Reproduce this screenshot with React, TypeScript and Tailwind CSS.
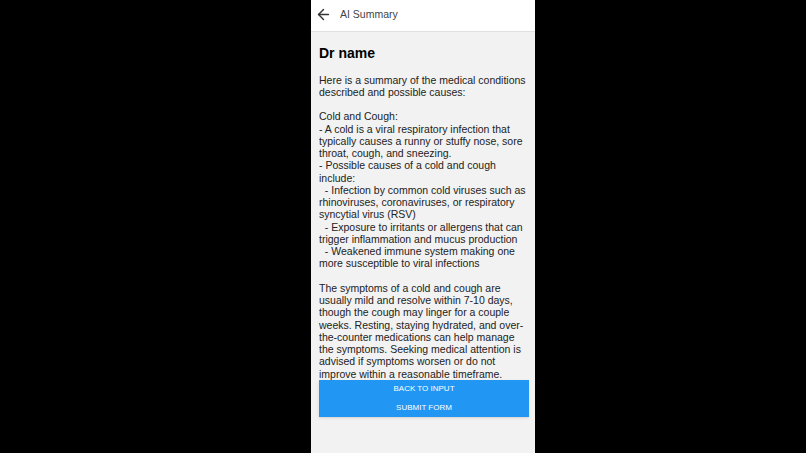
import { ArrowLeft } from 'lucide-react';

const summary = `Here is a summary of the medical conditions described and possible causes:

Cold and Cough:
- A cold is a viral respiratory infection that typically causes a runny or stuffy nose, sore throat, cough, and sneezing.
- Possible causes of a cold and cough include:
  - Infection by common cold viruses such as rhinoviruses, coronaviruses, or respiratory syncytial virus (RSV)
  - Exposure to irritants or allergens that can trigger inflammation and mucus production
  - Weakened immune system making one more susceptible to viral infections

The symptoms of a cold and cough are usually mild and resolve within 7-10 days, though the cough may linger for a couple weeks. Resting, staying hydrated, and over-the-counter medications can help manage the symptoms. Seeking medical attention is advised if symptoms worsen or do not improve within a reasonable timeframe.`;

export default function App() {
  return (
    <div className="flex h-[453px] w-full bg-black pl-[311px] font-['Liberation_Sans',Arial,sans-serif]">
      <div className="flex w-[224px] flex-col bg-[#f2f2f2]">
        <div className="flex h-[32px] shrink-0 items-center border-b border-[#e0e0e0] bg-white pb-[2px] pl-[3.5px]">
          <ArrowLeft className="h-[17px] w-[17px] text-[#333]" strokeWidth={2} />
          <span className="ml-[8.5px] text-[10.5px] text-[#444]">AI Summary</span>
        </div>
        <div className="flex flex-col pl-[8px] pr-[6px] pt-[12px]">
          <h1 className="text-[14px] font-bold leading-[18px] text-black">Dr name</h1>
          <p className="mt-[11.5px] whitespace-pre-wrap text-[10.5px] leading-[12.25px] text-[#222]">
            {summary}
          </p>
          <div className="flex flex-col bg-[#2196f3] shadow-sm">
            <button className="h-[18.5px] text-[8px] uppercase text-white">Back to input</button>
            <button className="h-[18.5px] text-[8px] uppercase text-white">Submit form</button>
          </div>
        </div>
      </div>
    </div>
  );
}
